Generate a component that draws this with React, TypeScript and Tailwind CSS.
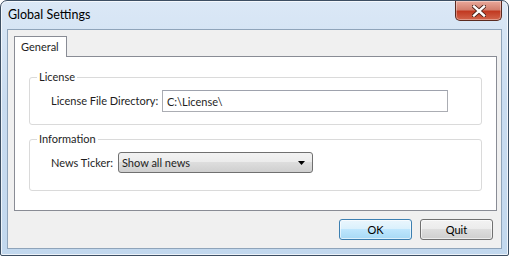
import React from "react";

function CloseButton() {
  return (
    <div className="w-[47px] h-[20px] rounded-b-[5px] border border-t-0 border-[#5a2a20] bg-[linear-gradient(to_bottom,#e9a99b_0%,#d3806f_45%,#c23a22_55%,#d2654c_100%)] shadow-[inset_0_0_0_1px_rgba(255,255,255,0.35)] flex items-center justify-center">
      <svg width="14" height="12" viewBox="0 0 14 12">
        <path d="M2 1.5 L12 10.5 M12 1.5 L2 10.5" stroke="#4a2018" strokeWidth="4.2" strokeLinecap="square" />
        <path d="M2 1.5 L12 10.5 M12 1.5 L2 10.5" stroke="#ffffff" strokeWidth="2.4" strokeLinecap="square" />
      </svg>
    </div>
  );
}

export default function App() {
  return (
    <div className="w-[509px] h-[256px] bg-white" style={{ fontFamily: "Lato, 'Noto Sans', sans-serif" }}>
      <div className="w-full h-full flex flex-col rounded-t-[7px] rounded-b-[2px] border border-[#3d4f63] bg-[linear-gradient(to_bottom,#dbe8f6_0%,#c9dcf0_40%,#c2d8ee_100%)] shadow-[inset_0_0_0_1px_rgba(255,255,255,0.7)]">
        <div className="h-[28px] flex justify-between pl-[7px] pr-[6px]">
          <span className="text-[12.5px] text-black leading-none pt-[8px]">Global Settings</span>
          <CloseButton />
        </div>
        <div className="mx-[6px] mb-[6px] flex-1 flex flex-col border border-[#8fa4ba] bg-[#f0f0f0] pt-[6px] pl-[6px] pr-[4px]">
          <div className="flex">
            <div className="w-[53px] h-[21px] -mb-px relative bg-white border border-b-0 border-[#898c95] text-[11px] text-[#1e1e1e] pl-[6px] pt-[3px] leading-[14px]">
              General
            </div>
          </div>
          <div className="h-[155px] bg-white border border-[#898c95] pt-[12px] px-[14px] text-[11px] text-[#1e1e1e]">
            <fieldset className="border border-[#dadada] rounded-[3px] pl-[21px] pt-[5px] pb-[12px]">
              <legend className="-ml-[14px] px-[2px] leading-[16px]">License</legend>
              <div className="flex items-center">
                <span className="w-[111px] shrink-0 whitespace-nowrap leading-[16px]">License File Directory:</span>
                <div className="w-[286px] h-[22px] border border-[#abadb3] border-t-[#9ea2ad] bg-white pl-[4px] flex items-center leading-none">
                  C:\License\
                </div>
              </div>
            </fieldset>
            <fieldset className="mt-[6px] border border-[#dadada] rounded-[3px] pl-[21px] pt-[5px] pb-[17px]">
              <legend className="-ml-[14px] px-[2px] leading-[16px]">Information</legend>
              <div className="flex items-center">
                <span className="w-[67px] shrink-0 whitespace-nowrap leading-[16px]">News Ticker:</span>
                <div className="w-[195px] h-[21px] rounded-[3px] border border-[#707070] bg-[linear-gradient(to_bottom,#f2f2f2_0%,#ebebeb_50%,#dddddd_50%,#cfcfcf_100%)] flex items-center justify-between pl-[3px] pr-[7px] leading-none">
                  <span>Show all news</span>
                  <svg width="7" height="4" viewBox="0 0 7 4">
                    <path d="M0 0 H7 L3.5 4 Z" fill="#000" />
                  </svg>
                </div>
              </div>
            </fieldset>
          </div>
          <div className="flex justify-end gap-[8px] mt-[8px] pr-[4px]">
            <button className="w-[73px] h-[21px] rounded-[3px] border border-[#3c7fb1] bg-[linear-gradient(to_bottom,#eaf6fd_0%,#d9f0fc_50%,#bee6fd_50%,#a7d9f5_100%)] shadow-[inset_0_0_0_1px_rgba(255,255,255,0.6)] text-[11px] text-black leading-none">
              OK
            </button>
            <button className="w-[73px] h-[21px] rounded-[3px] border border-[#707070] bg-[linear-gradient(to_bottom,#f2f2f2_0%,#ebebeb_50%,#dddddd_50%,#cfcfcf_100%)] shadow-[inset_0_0_0_1px_rgba(255,255,255,0.6)] text-[11px] text-black leading-none">
              Quit
            </button>
          </div>
        </div>
      </div>
    </div>
  );
}
